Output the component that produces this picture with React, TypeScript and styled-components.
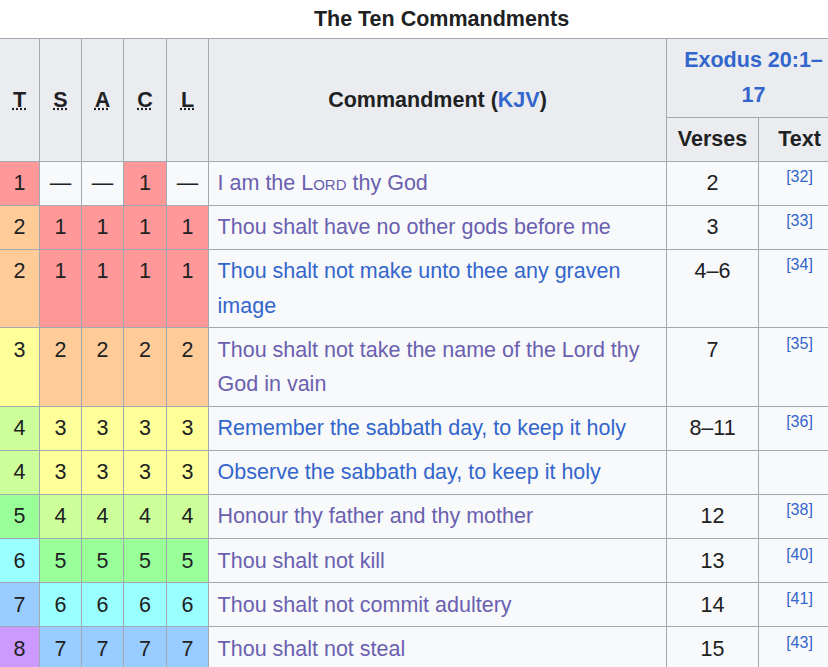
import * as React from "react";
import styled, { createGlobalStyle } from "styled-components";

const GlobalStyle = createGlobalStyle`
  html, body {
    margin: 0;
    padding: 0;
    overflow: hidden;
    background: #ffffff;
  }
  body {
    font-family: "Liberation Sans", Arial, sans-serif;
    font-size: 21.5px;
    color: #202122;
  }
`;

const tones: Record<number, string> = {
  1: "#ff9999",
  2: "#ffcc99",
  3: "#ffff99",
  4: "#ccff99",
  5: "#99ff99",
  6: "#99ffff",
  7: "#99ccff",
  8: "#cc99ff",
};

const Frame = styled.div`
  width: 885px;
  margin-left: -1px;
`;

const Caption = styled.div`
  font-weight: bold;
  text-align: center;
  line-height: 34.4px;
  padding: 1.5px 0 2px;
`;

const Table = styled.table`
  border-collapse: collapse;
  table-layout: fixed;
  width: 841px;
  background: #f8f9fa;
  line-height: 34.5px;
`;

const HeadCell = styled.th`
  background: #eaecf0;
  border: 1px solid #a2a9b1;
  padding: 4.3px 8.6px;
  text-align: center;
  vertical-align: middle;
  font-weight: bold;
`;

const Cell = styled.td<{ $tone?: string; $align?: "left" | "center" }>`
  background: ${(p) => p.$tone || "#f8f9fa"};
  border: 1px solid #a2a9b1;
  padding: 4.3px 8.6px;
  text-align: ${(p) => p.$align || "center"};
  vertical-align: top;
`;

const Link = styled.a<{ $visited?: boolean }>`
  color: ${(p) => (p.$visited ? "#6a60b0" : "#3366cc")};
  text-decoration: none;
`;

const Abbr = styled.abbr`
  text-decoration: underline dotted;
  text-underline-offset: 2px;
  cursor: help;
`;

const SmallCaps = styled.span`
  font-variant: small-caps;
`;

const Ref = styled.sup`
  font-size: 16px;
  line-height: 1;
  vertical-align: super;
  font-weight: normal;

  a {
    color: #3366cc;
    text-decoration: none;
  }
`;

type Row = {
  t: number;
  sacl: (number | null)[];
  text: React.ReactNode;
  visited: boolean;
  verses?: string;
  refNo?: number;
};

const rows: Row[] = [
  {
    t: 1,
    sacl: [null, null, 1, null],
    text: (
      <>
        I am the <SmallCaps>Lord</SmallCaps> thy God
      </>
    ),
    visited: true,
    verses: "2",
    refNo: 32,
  },
  { t: 2, sacl: [1, 1, 1, 1], text: "Thou shalt have no other gods before me", visited: true, verses: "3", refNo: 33 },
  { t: 2, sacl: [1, 1, 1, 1], text: "Thou shalt not make unto thee any graven image", visited: false, verses: "4–6", refNo: 34 },
  { t: 3, sacl: [2, 2, 2, 2], text: "Thou shalt not take the name of the Lord thy God in vain", visited: true, verses: "7", refNo: 35 },
  { t: 4, sacl: [3, 3, 3, 3], text: "Remember the sabbath day, to keep it holy", visited: false, verses: "8–11", refNo: 36 },
  { t: 4, sacl: [3, 3, 3, 3], text: "Observe the sabbath day, to keep it holy", visited: false },
  { t: 5, sacl: [4, 4, 4, 4], text: "Honour thy father and thy mother", visited: true, verses: "12", refNo: 38 },
  { t: 6, sacl: [5, 5, 5, 5], text: "Thou shalt not kill", visited: true, verses: "13", refNo: 40 },
  { t: 7, sacl: [6, 6, 6, 6], text: "Thou shalt not commit adultery", visited: true, verses: "14", refNo: 41 },
  { t: 8, sacl: [7, 7, 7, 7], text: "Thou shalt not steal", visited: true, verses: "15", refNo: 43 },
];

const traditions = [
  { key: "T", title: "Talmudic" },
  { key: "S", title: "Septuagint" },
  { key: "A", title: "Augustinian" },
  { key: "C", title: "Catholic" },
  { key: "L", title: "Lutheran" },
];

export default function App() {
  return (
    <Frame>
      <GlobalStyle />
      <Caption>The Ten Commandments</Caption>
      <Table>
        <colgroup>
          <col style={{ width: 40 }} />
          <col style={{ width: 42 }} />
          <col style={{ width: 42 }} />
          <col style={{ width: 43 }} />
          <col style={{ width: 42 }} />
          <col style={{ width: 458 }} />
          <col style={{ width: 92 }} />
          <col style={{ width: 82 }} />
        </colgroup>
        <thead>
          <tr>
            {traditions.map((t) => (
              <HeadCell key={t.key} rowSpan={2}>
                <Abbr title={t.title}>{t.key}</Abbr>
              </HeadCell>
            ))}
            <HeadCell rowSpan={2}>
              Commandment (<Link href="#kjv">KJV</Link>)
            </HeadCell>
            <HeadCell colSpan={2}>
              <Link href="#exodus">Exodus 20:1–17</Link>
            </HeadCell>
          </tr>
          <tr>
            <HeadCell>Verses</HeadCell>
            <HeadCell>Text</HeadCell>
          </tr>
        </thead>
        <tbody>
          {rows.map((r, i) => (
            <tr key={i}>
              <Cell $tone={tones[r.t]}>{r.t}</Cell>
              {r.sacl.map((v, j) => (
                <Cell key={j} $tone={v ? tones[v] : undefined}>
                  {v ?? "—"}
                </Cell>
              ))}
              <Cell $align="left">
                <Link href="#c" $visited={r.visited}>
                  {r.text}
                </Link>
              </Cell>
              <Cell>{r.verses}</Cell>
              <Cell>
                {r.refNo && (
                  <Ref>
                    <a href={`#ref${r.refNo}`}>[{r.refNo}]</a>
                  </Ref>
                )}
              </Cell>
            </tr>
          ))}
        </tbody>
      </Table>
    </Frame>
  );
}
